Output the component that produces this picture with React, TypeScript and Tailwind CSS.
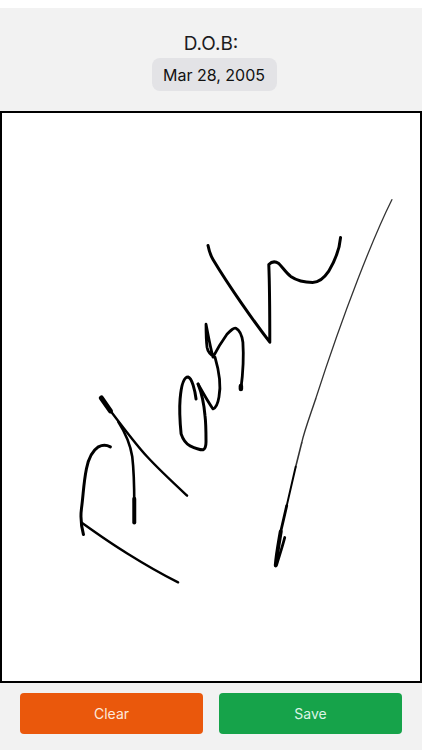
function Signature() {
  return (
    <svg viewBox="0 0 418 570" className="w-full h-full block" fill="none" stroke="#000" strokeLinecap="round" strokeLinejoin="round">
      {/* coordinates are page px minus the canvas origin (2, 113) */}
      <g transform="translate(-2 -113)">
        {/* P */}
        <path d="M110 448 C106 446 102 446 98 448 C92 452 88 460 86 470 C83 485 83 495 81 510 C80 518 80 525 83 536" strokeWidth="3" />
        <path d="M81 524 C95 534 112 546 127 555 C143 565 160 575 178 584" strokeWidth="2.400" />
        <path d="M108 409 C120 425 135 445 147 458 C160 472 173 484 187 497" strokeWidth="2.400" />
        <path d="M101 399 L110 412" strokeWidth="5" />
        <path d="M118 423 C125 434 130 445 132 458 C134 475 134 490 134 505" strokeWidth="2.600" />
        <path d="M134 500 L134 524" strokeWidth="4" />
        {/* a */}
        <path d="M196 400 C195 392 192 379 188 378 C183 378 181 388 180 400 C179 412 180 425 181 435 C183 441 186 445 190 447 C194 449 199 451 203 451 C206 450 206 446 206 443 C206 435 206 425 205 417 C204 405 202 395 198 385" strokeWidth="3" />
        {/* s */}
        <path d="M198 385 C203 394 208 403 213 410 C216 409 218 404 219 398 C221 388 220 375 215 358 C211 356 208 354 207 348 C206 340 206 332 206 325 C208 335 210 347 213 358 C217 350 222 342 227 335 C231 331 234 328 236 329 C240 331 242 336 243 343 C244 358 243 375 241 390" strokeWidth="2.800" />
        <path d="M241 387 L241 390" strokeWidth="4.500" />
        {/* h */}
        <path d="M208 246 C209 251 210 255 213 260 C222 275 232 290 241 303 C250 316 260 330 270 343 C270 320 270 290 269 265 C272 262 276 262 279 264 C283 268 286 273 291 277 C297 281 305 283 313 283 C320 283 325 278 329 272 C335 262 340 250 341 238" strokeWidth="3" />
        {/* tail */}
        <path d="M392.500 200 C375 235 345 310 316 400" strokeWidth="1.300" stroke="#333" />
        <path d="M316 400 C310 418 305 431 302 444" strokeWidth="1.400" stroke="#333" />
        <path d="M302 444 C300 452 298 460 296 468" strokeWidth="1.600" stroke="#333" />
        <path d="M296 468 C293 481 290 494 287 507" strokeWidth="2" />
        <path d="M287 507 C285 516 283 524 281 533" strokeWidth="2.800" />
        <path d="M281 533 C279 545 277 555 276 567" strokeWidth="4" />
        <path d="M285 539 C283 547 280 556 277 566" strokeWidth="2.800" />
      </g>
    </svg>
  );
}

export default function App() {
  return (
    <div className="h-[750px] w-[422px] bg-white pt-2 font-['Inter','Liberation_Sans',sans-serif] overflow-hidden">
      <div className="h-[742px] bg-[#f2f2f2] flex flex-col">
        <div className="h-[103px] flex flex-col items-center pt-[26px]">
          <div className="text-[19px] leading-5 text-[#1c1c1e]">D.O.B:</div>
          <div className="mt-[4px] ml-[6px] h-[33px] w-[125px] rounded-lg bg-[#e3e3e6] flex items-center justify-center text-base text-[#111]">
            Mar 28, 2005
          </div>
        </div>
        <div className="h-[572px] border-2 border-black bg-white">
          <Signature />
        </div>
        <div className="flex justify-between pl-5 pr-5 pt-2.5">
          <button className="h-[41px] w-[183px] rounded bg-[#ea580c] text-sm text-[#fde9dc]">Clear</button>
          <button className="h-[41px] w-[183px] rounded bg-[#16a34a] text-sm text-[#dcf5e5]">Save</button>
        </div>
      </div>
    </div>
  );
}
